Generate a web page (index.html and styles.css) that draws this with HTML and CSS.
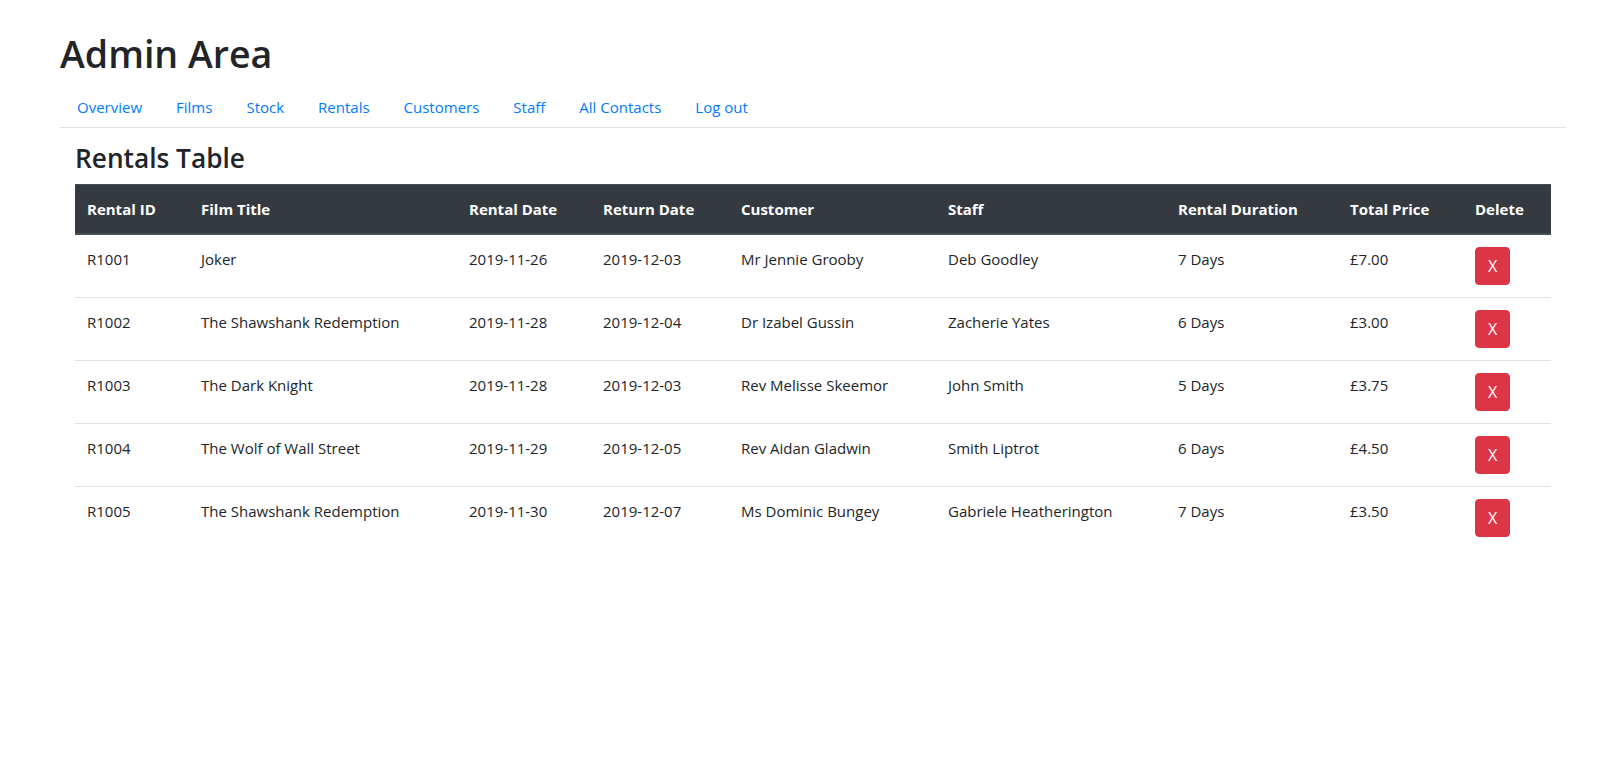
FILE: index.html
```html
<!DOCTYPE html>
<html lang="en">
<head>
<meta charset="utf-8">
<title>Admin Area</title>
<link rel="stylesheet" href="styles.css">
</head>
<body>
<div class="page">
  <h1 class="title">Admin Area</h1>
  <ul class="nav-tabs">
    <li class="nav-item"><a class="nav-link" href="#">Overview</a></li>
    <li class="nav-item"><a class="nav-link" href="#">Films</a></li>
    <li class="nav-item"><a class="nav-link" href="#">Stock</a></li>
    <li class="nav-item"><a class="nav-link" href="#">Rentals</a></li>
    <li class="nav-item"><a class="nav-link" href="#">Customers</a></li>
    <li class="nav-item"><a class="nav-link" href="#">Staff</a></li>
    <li class="nav-item"><a class="nav-link" href="#">All Contacts</a></li>
    <li class="nav-item"><a class="nav-link" href="#">Log out</a></li>
  </ul>
  <div class="content">
    <h3 class="section-title">Rentals Table</h3>
    <table class="table">
      <colgroup>
        <col class="c-id"><col class="c-film"><col class="c-rdate"><col class="c-ret">
        <col class="c-cust"><col class="c-staff"><col class="c-dur"><col class="c-price"><col class="c-del">
      </colgroup>
      <thead>
        <tr>
          <th>Rental ID</th><th>Film Title</th><th>Rental Date</th><th>Return Date</th>
          <th>Customer</th><th>Staff</th><th>Rental Duration</th><th>Total Price</th><th>Delete</th>
        </tr>
      </thead>
      <tbody>
        <tr>
          <td>R1001</td><td>Joker</td><td>2019-11-26</td><td>2019-12-03</td>
          <td>Mr Jennie Grooby</td><td>Deb Goodley</td><td>7 Days</td><td>£7.00</td>
          <td><button class="btn-danger" type="button">X</button></td>
        </tr>
        <tr>
          <td>R1002</td><td>The Shawshank Redemption</td><td>2019-11-28</td><td>2019-12-04</td>
          <td>Dr Izabel Gussin</td><td>Zacherie Yates</td><td>6 Days</td><td>£3.00</td>
          <td><button class="btn-danger" type="button">X</button></td>
        </tr>
        <tr>
          <td>R1003</td><td>The Dark Knight</td><td>2019-11-28</td><td>2019-12-03</td>
          <td>Rev Melisse Skeemor</td><td>John Smith</td><td>5 Days</td><td>£3.75</td>
          <td><button class="btn-danger" type="button">X</button></td>
        </tr>
        <tr>
          <td>R1004</td><td>The Wolf of Wall Street</td><td>2019-11-29</td><td>2019-12-05</td>
          <td>Rev Aidan Gladwin</td><td>Smith Liptrot</td><td>6 Days</td><td>£4.50</td>
          <td><button class="btn-danger" type="button">X</button></td>
        </tr>
        <tr>
          <td>R1005</td><td>The Shawshank Redemption</td><td>2019-11-30</td><td>2019-12-07</td>
          <td>Ms Dominic Bungey</td><td>Gabriele Heatherington</td><td>7 Days</td><td>£3.50</td>
          <td><button class="btn-danger" type="button">X</button></td>
        </tr>
      </tbody>
    </table>
  </div>
</div>
</body>
</html>
```
FILE: styles.css
```css
* { box-sizing: border-box; }

body {
  margin: 0;
  font-family: "Open Sans", "Noto Sans", "Liberation Sans", sans-serif;
  font-size: 15px;
  line-height: 24px;
  color: #212529;
  background: #fff;
}

.page {
  padding: 30px 54px 0 60px;
}

.title {
  margin: 0 0 8px;
  font-size: 37.5px;
  font-weight: 600;
  line-height: 48px;
}

.nav-tabs {
  display: flex;
  list-style: none;
  margin: 0;
  padding: 0;
  border-bottom: 1px solid #dee2e6;
}

.nav-item {
  margin-bottom: -1px;
}

.nav-link {
  display: block;
  padding: 8px 16px;
  border: 1px solid transparent;
  color: #007bff;
  text-decoration: none;
}

.content {
  padding: 14px 15px 0;
}

.section-title {
  margin: 0 0 8px;
  font-size: 26.25px;
  font-weight: 600;
  line-height: 33.6px;
}

.table {
  width: 100%;
  border-collapse: collapse;
  table-layout: fixed;
  color: #212529;
}

.c-id { width: 114px; }
.c-film { width: 268px; }
.c-rdate { width: 134px; }
.c-ret { width: 138px; }
.c-cust { width: 207px; }
.c-staff { width: 230px; }
.c-dur { width: 172px; }
.c-price { width: 125px; }
.c-del { width: 88px; }

.table th,
.table td {
  padding: 12px;
  text-align: left;
  vertical-align: top;
  border-top: 1px solid #dee2e6;
  white-space: nowrap;
}

.table thead th {
  vertical-align: bottom;
  background: #343a40;
  color: #fff;
  font-weight: 700;
  border-top-color: #454d55;
  border-bottom: 2px solid #454d55;
}

.table tbody tr:first-child td {
  border-top: 0;
}

.btn-danger {
  display: inline-block;
  padding: 6px 12px;
  font-family: inherit;
  font-size: 16px;
  line-height: 24px;
  color: #fff;
  background: #dc3545;
  border: 1px solid #dc3545;
  border-radius: 4px;
  cursor: pointer;
}
```
